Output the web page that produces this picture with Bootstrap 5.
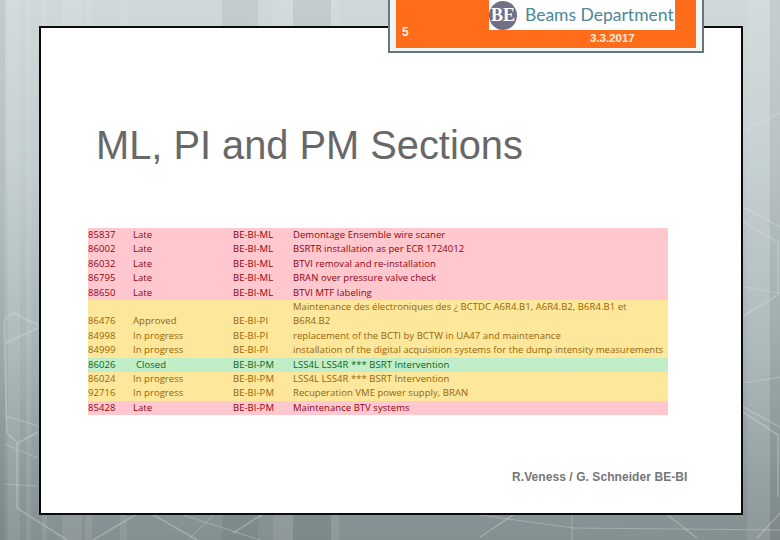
<!DOCTYPE html>
<html lang="en">
<head>
  <meta charset="UTF-8" />
  <title>ML, PI and PM Sections</title>
  <link href="https://cdn.jsdelivr.net/npm/bootstrap@5.3.3/dist/css/bootstrap.min.css" rel="stylesheet">
  <style>
    html, body { height: 100%; }
    body {
      width: 780px; height: 540px; overflow: hidden; position: relative;
      background: linear-gradient(180deg, #cfd9da 0%, #c2cdcf 30%, #a9b6b8 62%, #8b989a 90%, #848f91 100%);
      font-family: "Liberation Sans", Arial, sans-serif;
    }
    .bg-lines { position: absolute; left: 0; top: 0; }
    .slide-box {
      position: absolute; left: 39px; top: 26px; width: 704px; height: 489px;
      background: #fff; border: 2px solid #0c0c0c; padding: 0 24px 0 47px;
    }
    .head-tab {
      position: absolute; left: 388px; top: -8px; width: 316px; height: 61px;
      background: #ff6d1a; border: solid #f3f5f5; border-width: 8px 8px 5px;
      color: #fff; font-weight: 700; font-size: 11px;
    }
    .tab-frame { position: absolute; left: 388px; top: -8px; width: 316px; height: 61px; border: 2px solid #67767a; }
    .tab-num { position: absolute; left: 6px; top: 23px; font-size: 12px; color: #fdf0e0; }
    .tab-date { position: absolute; left: 194px; top: 30px; font-size: 11.5px; color: #fdeee0; }
    .logo-box {
      position: absolute; left: 93px; top: 0; width: 186px; height: 30px;
      background: #fff; display: flex; align-items: center; overflow: hidden;
    }
    .logo-disc {
      width: 28px; height: 29px; border-radius: 50%; background: #716f85; color: #fff; flex: none;
      font-family: "Liberation Serif", serif; font-size: 18px; line-height: 29px; text-align: center; font-weight: 700;
    }
    .logo-word {
      margin-left: 8px; color: #4c8797; font-family: "Lato", sans-serif; font-weight: 400;
      font-size: 17.5px; white-space: nowrap; line-height: 1;
    }
    .slide-title {
      margin: 94px 0 0 8px; font-family: "Liberation Sans", Arial, sans-serif; font-size: 39.8px; font-weight: 400;
      line-height: 46px; color: #686868; white-space: nowrap;
    }
    .issues { width: 580px; margin-top: 60px; table-layout: fixed; border-collapse: collapse; }
    .issues td {
      padding: 0; font-family: "Open Sans", sans-serif; font-size: 9.5px; line-height: 14.4px;
      height: 14.4px; vertical-align: bottom; letter-spacing: .05px; white-space: nowrap;
    }
    .r-late td { background: #ffc7ce; color: #8f0510; }
    .r-warn td { background: #fde79a; color: #94660a; }
    .r-done td { background: #c1edc8; color: #0a6616; }
    .col-a { width: 45px; } .col-b { width: 100px; } .col-c { width: 60px; }
    .pad-closed { padding-left: 3px !important; }
    .credit {
      position: absolute; left: 471px; top: 440px; font-size: 12px; font-weight: 700; color: #747779; white-space: nowrap;
      letter-spacing: .07px;
    }
  </style>
</head>
<body>
  <svg class="bg-lines" width="780" height="540" viewBox="0 0 780 540">
    <g fill="#fff" opacity=".08">
      <rect x="8" y="0" width="12" height="540"/>
      <rect x="26" y="0" width="5" height="540"/>
      <rect x="42" y="0" width="5" height="540"/>
      <rect x="62" y="0" width="20" height="540"/>
      <rect x="85" y="0" width="7" height="540"/>
      <rect x="120" y="0" width="7" height="540"/>
      <rect x="273" y="0" width="20" height="540"/>
      <rect x="331" y="0" width="8" height="540"/>
      <rect x="747" y="0" width="23" height="540"/>
    </g>
    <g fill="#000" opacity=".05">
      <rect x="0" y="0" width="5" height="540"/>
      <rect x="222" y="0" width="36" height="540"/>
      <rect x="293" y="0" width="38" height="540"/>
      <rect x="770" y="0" width="10" height="540"/>
    </g>
    <g stroke="#e4eaeb" stroke-width="1.5" opacity=".3" fill="none">
      <path d="M38 328 L6 343"/>
      <path d="M4 320 L13 313 L38 325"/>
      <path d="M4 320 L7 433 L18 443 L38 432"/>
      <path d="M17 443 L17 508 L67 540"/>
      <path d="M93 540 L137 514"/>
      <path d="M152 514 L197 540"/>
      <path d="M233 533 L263 514"/>
      <path d="M743 131 L780 113"/>
      <path d="M743 207 L780 227"/>
      <path d="M743 222 L778 242 L778 295 L743 316"/>
      <path d="M743 407 L780 427"/>
      <path d="M743 412 L778 435 L778 497"/>
      <path d="M480 537 L513 515"/>
      <path d="M665 513 L697 538"/>
      <path d="M757 538 L780 513"/>
    </g>
    <g stroke="#e4eaeb" stroke-width=".7" opacity=".45" fill="none">
      <path d="M6 416 L38 426"/>
      <path d="M5 444 L38 458"/>
      <path d="M5 484 L38 486"/>
      <path d="M177 513 L260 540"/>
      <path d="M188 540 L215 514"/>
      <path d="M743 287 L780 293"/>
      <path d="M743 383 L780 377"/>
      <path d="M480 515 L573 528 L780 530"/>
      <path d="M572 515 L572 540"/>
    </g>
  </svg>

  <div class="slide-box">
    <h1 class="slide-title">ML, PI and PM Sections</h1>
    <table class="issues">
      <colgroup><col class="col-a"><col class="col-b"><col class="col-c"><col></colgroup>
      <tbody>
        <tr class="r-late"><td>85837</td><td>Late</td><td>BE-BI-ML</td><td>Demontage Ensemble wire scaner</td></tr>
        <tr class="r-late"><td>86002</td><td>Late</td><td>BE-BI-ML</td><td>BSRTR installation as per ECR 1724012</td></tr>
        <tr class="r-late"><td>86032</td><td>Late</td><td>BE-BI-ML</td><td>BTVI removal and re-installation</td></tr>
        <tr class="r-late"><td>86795</td><td>Late</td><td>BE-BI-ML</td><td>BRAN over pressure valve check</td></tr>
        <tr class="r-late"><td>88650</td><td>Late</td><td>BE-BI-ML</td><td>BTVI MTF labeling</td></tr>
        <tr class="r-warn"><td>86476</td><td>Approved</td><td>BE-BI-PI</td><td>Maintenance des électroniques des ¿ BCTDC A6R4.B1, A6R4.B2, B6R4.B1 et<br>B6R4.B2</td></tr>
        <tr class="r-warn"><td>84998</td><td>In progress</td><td>BE-BI-PI</td><td>replacement of the BCTI by BCTW in UA47 and maintenance</td></tr>
        <tr class="r-warn"><td>84999</td><td>In progress</td><td>BE-BI-PI</td><td>installation of the digital acquisition systems for the dump intensity measurements</td></tr>
        <tr class="r-done"><td>86026</td><td class="pad-closed">Closed</td><td>BE-BI-PM</td><td>LSS4L LSS4R *** BSRT Intervention</td></tr>
        <tr class="r-warn"><td>86024</td><td>In progress</td><td>BE-BI-PM</td><td>LSS4L LSS4R *** BSRT Intervention</td></tr>
        <tr class="r-warn"><td>92716</td><td>In progress</td><td>BE-BI-PM</td><td>Recuperation VME power supply, BRAN</td></tr>
        <tr class="r-late"><td>85428</td><td>Late</td><td>BE-BI-PM</td><td>Maintenance BTV systems</td></tr>
      </tbody>
    </table>
    <div class="credit">R.Veness / G. Schneider BE-BI</div>
  </div>

  <div class="head-tab">
    <div class="logo-box"><span class="logo-disc">BE</span><span class="logo-word">Beams Department</span></div>
    <span class="tab-num">5</span>
    <span class="tab-date">3.3.2017</span>
  </div>
  <div class="tab-frame"></div>

  <script src="https://cdn.jsdelivr.net/npm/bootstrap@5.3.3/dist/js/bootstrap.bundle.min.js"></script>
</body>
</html>
